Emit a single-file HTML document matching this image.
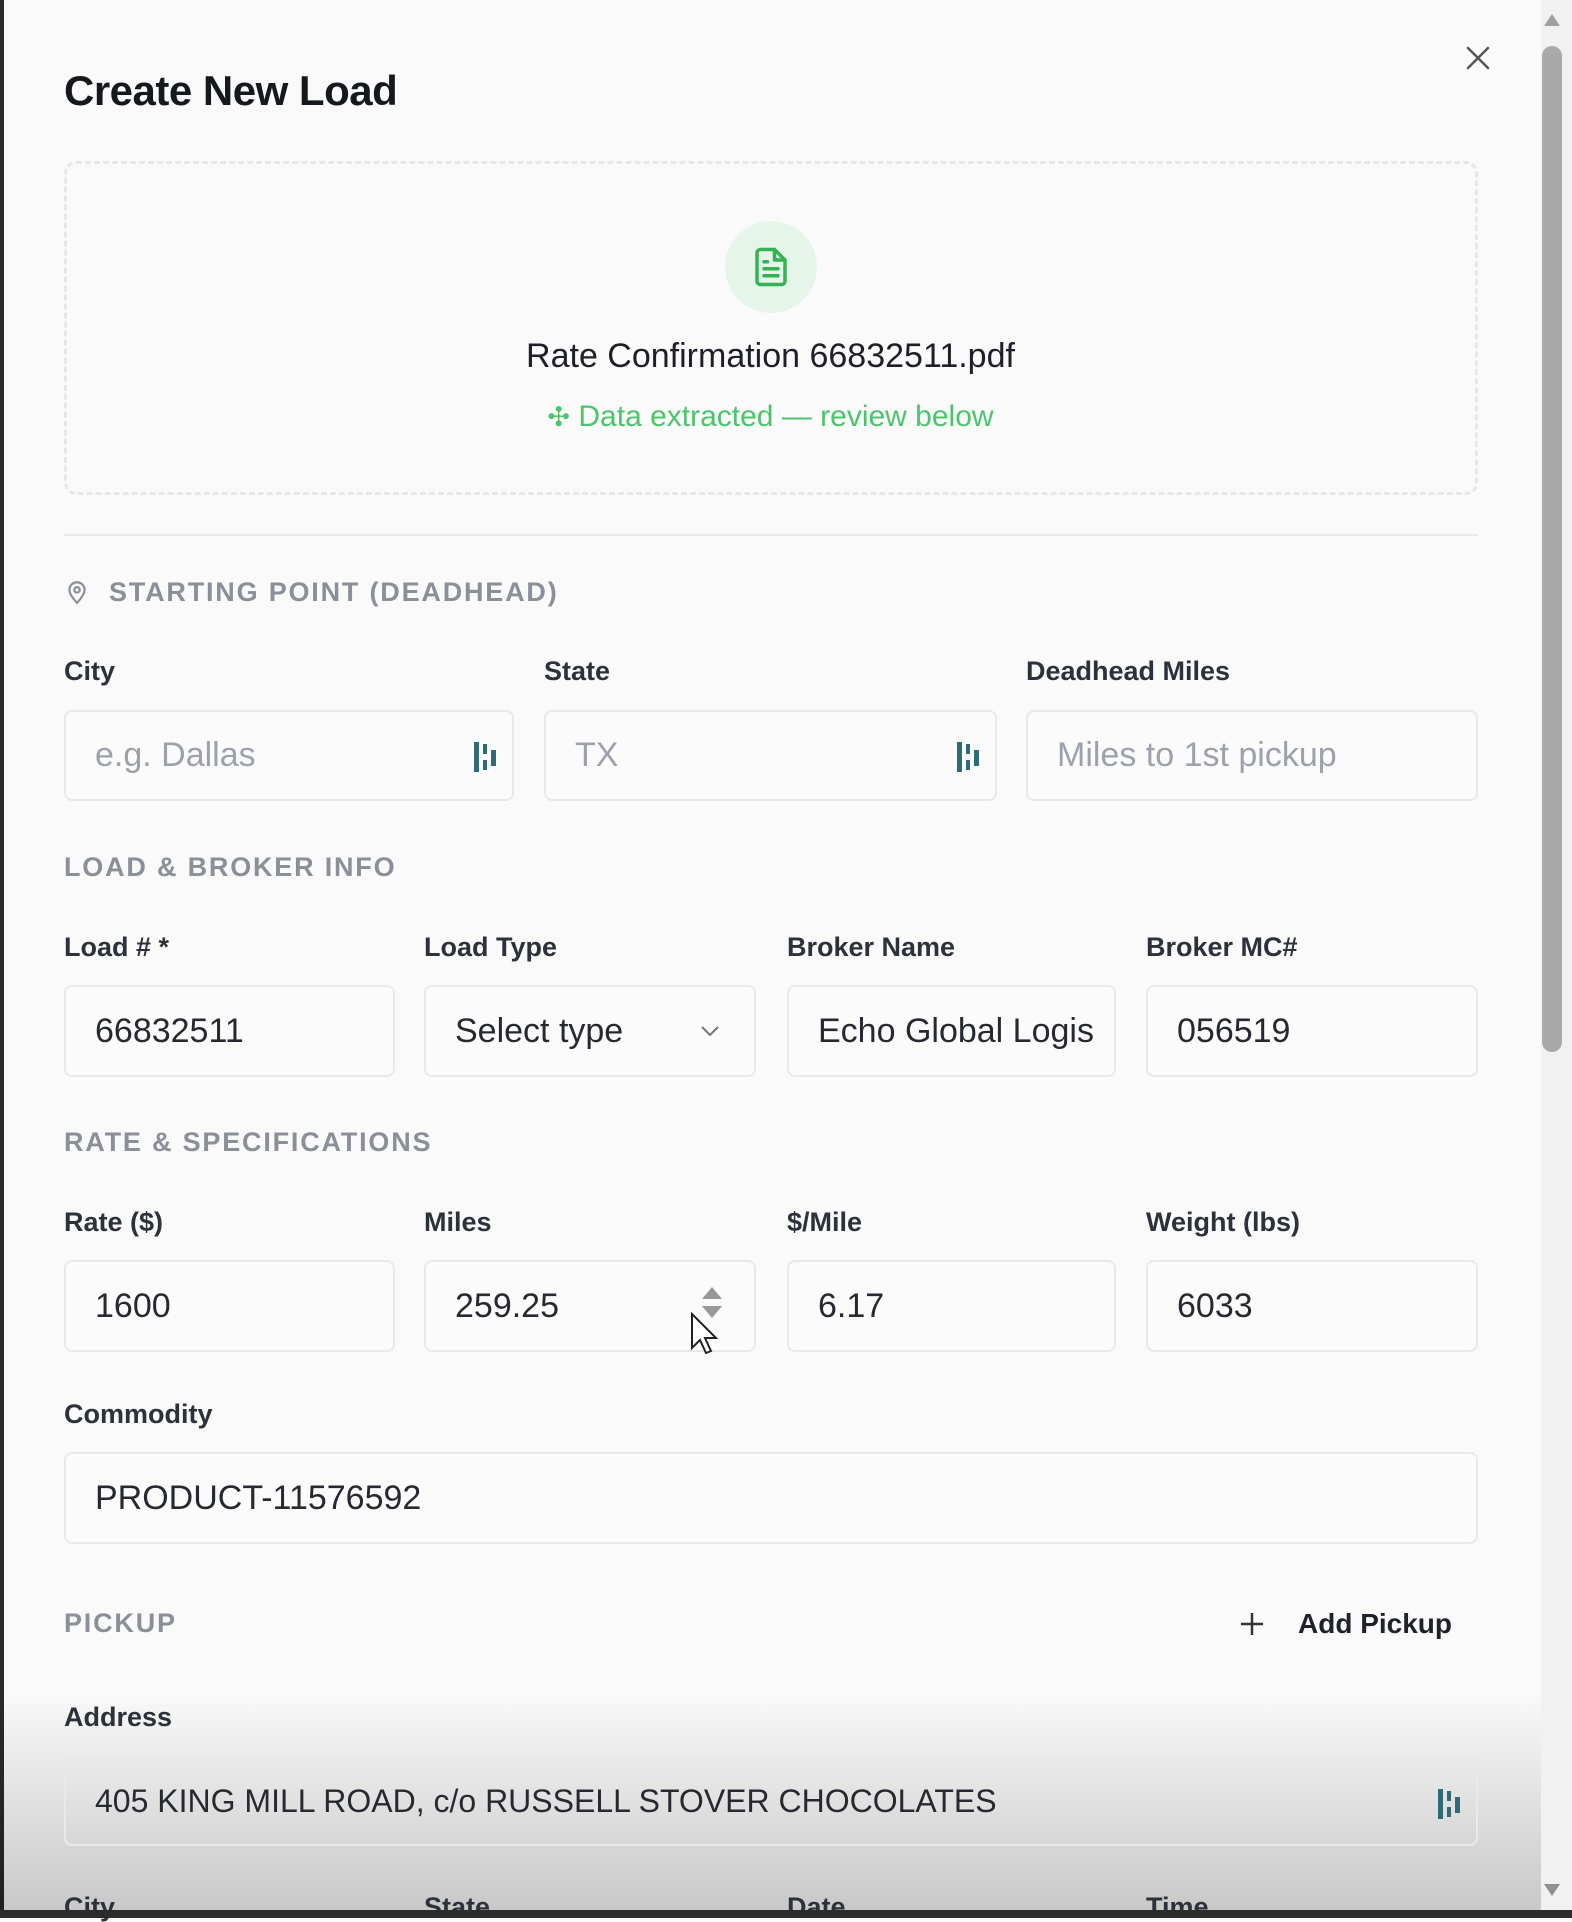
<!DOCTYPE html>
<html><head><meta charset="utf-8"><style>
*{margin:0;padding:0;box-sizing:border-box}
body{width:1572px;height:1918px;overflow:hidden;background:#fafafb;font-family:"Liberation Sans",sans-serif;position:relative;color:#1f2329}
.a{position:absolute}
.lbl{position:absolute;font-size:27px;font-weight:bold;color:#2c313a;line-height:30px}
.sec{position:absolute;font-size:27px;font-weight:bold;color:#8a8f98;letter-spacing:1.8px;line-height:30px}
.in{position:absolute;border:2px solid #e8e9ec;border-radius:8px;background:#fbfbfc;font-size:34px;color:#262a30;padding-left:29px;display:flex;align-items:center}
.ph{color:#9da2aa}
.grip{position:absolute;right:12px;top:28px}
</style></head><body>
<div class="a" style="left:0;top:0;width:4px;height:1918px;background:#2a2a2a"></div>
<div class="a" style="left:0;top:1690px;width:1541px;height:220px;background:linear-gradient(to bottom,rgba(0,0,0,0),rgba(0,0,0,0.2))"></div>
<div class="a" style="left:1541px;top:0;width:31px;height:1910px;background:#f1f1f1"></div>
<div class="a" style="left:1542px;top:46px;width:20px;height:1006px;background:#a9a9a9;border-radius:10px"></div>
<div class="a" style="left:1544px;top:14px;width:0;height:0;border-left:8px solid transparent;border-right:8px solid transparent;border-bottom:12px solid #a0a0a0"></div>
<div class="a" style="left:1544px;top:1884px;width:0;height:0;border-left:8px solid transparent;border-right:8px solid transparent;border-top:12px solid #909090"></div>

<div class="a" style="left:64px;top:67px;font-size:42px;font-weight:bold;color:#15181d;letter-spacing:-0.5px">Create New Load</div>
<svg class="a" style="left:1464px;top:44px" width="28" height="28" viewBox="0 0 28 28"><path d="M4 4L24 24M24 4L4 24" stroke="#555" stroke-width="2.5" stroke-linecap="round"/></svg>

<div class="a" style="left:64px;top:161px;width:1414px;height:334px;border:3px dashed #e6e7ea;border-radius:12px"></div>
<div class="a" style="left:725px;top:221px;width:92px;height:92px;border-radius:50%;background:#e6f5ea"></div>
<svg class="a" style="left:750px;top:245px" width="42" height="44" viewBox="0 0 24 24" fill="none" stroke="#34b352" stroke-width="2" stroke-linecap="round" stroke-linejoin="round"><path d="M14 2H6a2 2 0 0 0-2 2v16a2 2 0 0 0 2 2h12a2 2 0 0 0 2-2V8z"/><path d="M14 2v6h6"/><path d="M16 13H8M16 17H8M10 9H8"/></svg>
<div class="a" style="left:0;width:1541px;top:337px;text-align:center;font-size:34px;color:#1d2026">Rate Confirmation 66832511.pdf</div>
<div class="a" style="left:0;width:1541px;top:400px;text-align:center;font-size:30px;color:#4cc46b"><span style="font-size:27px">✣</span> Data extracted — review below</div>
<div class="a" style="left:64px;top:534px;width:1414px;height:2px;background:#e8e9ec"></div>

<svg class="a" style="left:64px;top:577px" width="26" height="30" viewBox="0 0 24 24" fill="none" stroke="#8a8f98" stroke-width="2"><path d="M12 22s7-7 7-12a7 7 0 0 0-14 0c0 5 7 12 7 12z"/><circle cx="12" cy="10" r="2.5"/></svg>
<div class="sec" style="left:109px;top:577px">STARTING POINT (DEADHEAD)</div>

<div class="lbl" style="left:64px;top:656px">City</div>
<div class="lbl" style="left:544px;top:656px">State</div>
<div class="lbl" style="left:1026px;top:656px">Deadhead Miles</div>
<div class="in" style="left:64px;top:710px;width:450px;height:91px"><span class="ph">e.g. Dallas</span><svg class="grip" width="28" height="34" viewBox="0 0 28 34"><rect x="2" y="2" width="5" height="30" fill="#2e6b76"/><rect x="11" y="4" width="4" height="10" fill="#2e6b76"/><rect x="11" y="20" width="4" height="10" fill="#2e6b76"/><rect x="19" y="10" width="5" height="16" fill="#2e6b76"/></svg></div>
<div class="in" style="left:544px;top:710px;width:453px;height:91px"><span class="ph">TX</span><svg class="grip" width="28" height="34" viewBox="0 0 28 34"><rect x="2" y="2" width="5" height="30" fill="#2e6b76"/><rect x="11" y="4" width="4" height="10" fill="#2e6b76"/><rect x="11" y="20" width="4" height="10" fill="#2e6b76"/><rect x="19" y="10" width="5" height="16" fill="#2e6b76"/></svg></div>
<div class="in" style="left:1026px;top:710px;width:452px;height:91px"><span class="ph">Miles to 1st pickup</span></div>

<div class="sec" style="left:64px;top:852px">LOAD &amp; BROKER INFO</div>
<div class="lbl" style="left:64px;top:932px">Load # *</div>
<div class="lbl" style="left:424px;top:932px">Load Type</div>
<div class="lbl" style="left:787px;top:932px">Broker Name</div>
<div class="lbl" style="left:1146px;top:932px">Broker MC#</div>
<div class="in" style="left:64px;top:985px;width:331px;height:92px">66832511</div>
<div class="in" style="left:424px;top:985px;width:332px;height:92px">Select type<svg class="a" style="left:272px;top:36px" width="24" height="16" viewBox="0 0 24 16"><path d="M4 4l8 8 8-8" fill="none" stroke="#777" stroke-width="2"/></svg></div>
<div class="in" style="left:787px;top:985px;width:329px;height:92px;overflow:hidden;white-space:nowrap">Echo Global Logis</div>
<div class="in" style="left:1146px;top:985px;width:332px;height:92px">056519</div>

<div class="sec" style="left:64px;top:1127px">RATE &amp; SPECIFICATIONS</div>
<div class="lbl" style="left:64px;top:1207px">Rate ($)</div>
<div class="lbl" style="left:424px;top:1207px">Miles</div>
<div class="lbl" style="left:787px;top:1207px">$/Mile</div>
<div class="lbl" style="left:1146px;top:1207px">Weight (lbs)</div>
<div class="in" style="left:64px;top:1260px;width:331px;height:92px">1600</div>
<div class="in" style="left:424px;top:1260px;width:332px;height:92px">259.25
<div class="a" style="left:276px;top:25px;border-left:10px solid transparent;border-right:10px solid transparent;border-bottom:12px solid #999"></div>
<div class="a" style="left:276px;top:44px;border-left:10px solid transparent;border-right:10px solid transparent;border-top:12px solid #999"></div>
<svg class="a" style="left:264px;top:50px" width="30" height="44" viewBox="0 0 30 44"><path d="M2 2v34l8-8 6 13 5-2-6-13h11z" fill="#fff" stroke="#222" stroke-width="2"/></svg></div>
<div class="in" style="left:787px;top:1260px;width:329px;height:92px">6.17</div>
<div class="in" style="left:1146px;top:1260px;width:332px;height:92px">6033</div>

<div class="lbl" style="left:64px;top:1399px">Commodity</div>
<div class="in" style="left:64px;top:1452px;width:1414px;height:92px">PRODUCT-11576592</div>

<div class="sec" style="left:64px;top:1608px">PICKUP</div>
<svg class="a" style="left:1239px;top:1611px" width="26" height="26" viewBox="0 0 26 26"><path d="M13 2v22M2 13h22" stroke="#333" stroke-width="2.5"/></svg>
<div class="a" style="left:1298px;top:1608px;font-size:28px;font-weight:bold;color:#1f2329">Add Pickup</div>

<div class="lbl" style="left:64px;top:1702px">Address</div>
<div class="in" style="left:64px;top:1757px;width:1414px;height:89px;background:transparent;font-size:32px">405 KING MILL ROAD, c/o RUSSELL STOVER CHOCOLATES<svg class="grip" width="28" height="34" viewBox="0 0 28 34"><rect x="2" y="2" width="5" height="30" fill="#2e6b76"/><rect x="11" y="4" width="4" height="10" fill="#2e6b76"/><rect x="11" y="20" width="4" height="10" fill="#2e6b76"/><rect x="19" y="10" width="5" height="16" fill="#2e6b76"/></svg></div>

<div class="lbl" style="left:64px;top:1892px">City</div>
<div class="lbl" style="left:424px;top:1892px">State</div>
<div class="lbl" style="left:787px;top:1892px">Date</div>
<div class="lbl" style="left:1146px;top:1892px">Time</div>
<div class="a" style="left:0;top:1910px;width:1572px;height:8px;background:#2b2b2b"></div>
</body></html>
